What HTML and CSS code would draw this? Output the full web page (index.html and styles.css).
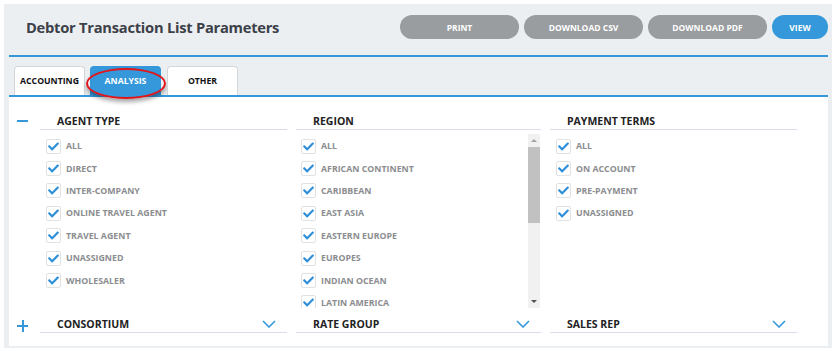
FILE: index.html
```html
<!DOCTYPE html>
<html lang="en">
  <head>
    <meta charset="UTF-8" />
    <title>Debtor Transaction List Parameters</title>
    <link rel="stylesheet" href="styles.css">
  </head>
  <body>
    <div class="page">
      <div class="top-bar">
        <h1>Debtor Transaction List Parameters</h1>
        <div class="actions">
          <button class="btn grey wide">PRINT</button>
          <button class="btn grey wide">DOWNLOAD CSV</button>
          <button class="btn grey wide">DOWNLOAD PDF</button>
          <button class="btn blue">VIEW</button>
        </div>
      </div>

      <div class="tabs">
        <div class="tab">ACCOUNTING</div>
        <div class="tab active">ANALYSIS<span class="mark"></span></div>
        <div class="tab">OTHER</div>
      </div>

      <div class="panel">
        <div class="grid">
          <!-- row 1: open groups -->
          <div class="toggle minus"></div>
          <div class="group-head">AGENT TYPE</div>
          <div class="group-head">REGION</div>
          <div class="group-head">PAYMENT TERMS</div>

          <div></div>
          <ul class="checklist">
            <li><span class="box"><svg viewBox="0 0 512 512"><path d="M173.9 439.4l-166.4-166.4c-10-10-10-26.2 0-36.2l36.2-36.2c10-10 26.2-10 36.2 0L192 312.7 432.1 72.6c10-10 26.2-10 36.2 0l36.2 36.2c10 10 10 26.2 0 36.2l-294.4 294.4c-10 10-26.2 10-36.2 0z"/></svg></span>ALL</li>
            <li><span class="box"><svg viewBox="0 0 512 512"><path d="M173.9 439.4l-166.4-166.4c-10-10-10-26.2 0-36.2l36.2-36.2c10-10 26.2-10 36.2 0L192 312.7 432.1 72.6c10-10 26.2-10 36.2 0l36.2 36.2c10 10 10 26.2 0 36.2l-294.4 294.4c-10 10-26.2 10-36.2 0z"/></svg></span>DIRECT</li>
            <li><span class="box"><svg viewBox="0 0 512 512"><path d="M173.9 439.4l-166.4-166.4c-10-10-10-26.2 0-36.2l36.2-36.2c10-10 26.2-10 36.2 0L192 312.7 432.1 72.6c10-10 26.2-10 36.2 0l36.2 36.2c10 10 10 26.2 0 36.2l-294.4 294.4c-10 10-26.2 10-36.2 0z"/></svg></span>INTER-COMPANY</li>
            <li><span class="box"><svg viewBox="0 0 512 512"><path d="M173.9 439.4l-166.4-166.4c-10-10-10-26.2 0-36.2l36.2-36.2c10-10 26.2-10 36.2 0L192 312.7 432.1 72.6c10-10 26.2-10 36.2 0l36.2 36.2c10 10 10 26.2 0 36.2l-294.4 294.4c-10 10-26.2 10-36.2 0z"/></svg></span>ONLINE TRAVEL AGENT</li>
            <li><span class="box"><svg viewBox="0 0 512 512"><path d="M173.9 439.4l-166.4-166.4c-10-10-10-26.2 0-36.2l36.2-36.2c10-10 26.2-10 36.2 0L192 312.7 432.1 72.6c10-10 26.2-10 36.2 0l36.2 36.2c10 10 10 26.2 0 36.2l-294.4 294.4c-10 10-26.2 10-36.2 0z"/></svg></span>TRAVEL AGENT</li>
            <li><span class="box"><svg viewBox="0 0 512 512"><path d="M173.9 439.4l-166.4-166.4c-10-10-10-26.2 0-36.2l36.2-36.2c10-10 26.2-10 36.2 0L192 312.7 432.1 72.6c10-10 26.2-10 36.2 0l36.2 36.2c10 10 10 26.2 0 36.2l-294.4 294.4c-10 10-26.2 10-36.2 0z"/></svg></span>UNASSIGNED</li>
            <li><span class="box"><svg viewBox="0 0 512 512"><path d="M173.9 439.4l-166.4-166.4c-10-10-10-26.2 0-36.2l36.2-36.2c10-10 26.2-10 36.2 0L192 312.7 432.1 72.6c10-10 26.2-10 36.2 0l36.2 36.2c10 10 10 26.2 0 36.2l-294.4 294.4c-10 10-26.2 10-36.2 0z"/></svg></span>WHOLESALER</li>
          </ul>
          <div class="scroll-wrap">
            <ul class="checklist scroll">
              <li><span class="box"><svg viewBox="0 0 512 512"><path d="M173.9 439.4l-166.4-166.4c-10-10-10-26.2 0-36.2l36.2-36.2c10-10 26.2-10 36.2 0L192 312.7 432.1 72.6c10-10 26.2-10 36.2 0l36.2 36.2c10 10 10 26.2 0 36.2l-294.4 294.4c-10 10-26.2 10-36.2 0z"/></svg></span>ALL</li>
              <li><span class="box"><svg viewBox="0 0 512 512"><path d="M173.9 439.4l-166.4-166.4c-10-10-10-26.2 0-36.2l36.2-36.2c10-10 26.2-10 36.2 0L192 312.7 432.1 72.6c10-10 26.2-10 36.2 0l36.2 36.2c10 10 10 26.2 0 36.2l-294.4 294.4c-10 10-26.2 10-36.2 0z"/></svg></span>AFRICAN CONTINENT</li>
              <li><span class="box"><svg viewBox="0 0 512 512"><path d="M173.9 439.4l-166.4-166.4c-10-10-10-26.2 0-36.2l36.2-36.2c10-10 26.2-10 36.2 0L192 312.7 432.1 72.6c10-10 26.2-10 36.2 0l36.2 36.2c10 10 10 26.2 0 36.2l-294.4 294.4c-10 10-26.2 10-36.2 0z"/></svg></span>CARIBBEAN</li>
              <li><span class="box"><svg viewBox="0 0 512 512"><path d="M173.9 439.4l-166.4-166.4c-10-10-10-26.2 0-36.2l36.2-36.2c10-10 26.2-10 36.2 0L192 312.7 432.1 72.6c10-10 26.2-10 36.2 0l36.2 36.2c10 10 10 26.2 0 36.2l-294.4 294.4c-10 10-26.2 10-36.2 0z"/></svg></span>EAST ASIA</li>
              <li><span class="box"><svg viewBox="0 0 512 512"><path d="M173.9 439.4l-166.4-166.4c-10-10-10-26.2 0-36.2l36.2-36.2c10-10 26.2-10 36.2 0L192 312.7 432.1 72.6c10-10 26.2-10 36.2 0l36.2 36.2c10 10 10 26.2 0 36.2l-294.4 294.4c-10 10-26.2 10-36.2 0z"/></svg></span>EASTERN EUROPE</li>
              <li><span class="box"><svg viewBox="0 0 512 512"><path d="M173.9 439.4l-166.4-166.4c-10-10-10-26.2 0-36.2l36.2-36.2c10-10 26.2-10 36.2 0L192 312.7 432.1 72.6c10-10 26.2-10 36.2 0l36.2 36.2c10 10 10 26.2 0 36.2l-294.4 294.4c-10 10-26.2 10-36.2 0z"/></svg></span>EUROPES</li>
              <li><span class="box"><svg viewBox="0 0 512 512"><path d="M173.9 439.4l-166.4-166.4c-10-10-10-26.2 0-36.2l36.2-36.2c10-10 26.2-10 36.2 0L192 312.7 432.1 72.6c10-10 26.2-10 36.2 0l36.2 36.2c10 10 10 26.2 0 36.2l-294.4 294.4c-10 10-26.2 10-36.2 0z"/></svg></span>INDIAN OCEAN</li>
              <li><span class="box"><svg viewBox="0 0 512 512"><path d="M173.9 439.4l-166.4-166.4c-10-10-10-26.2 0-36.2l36.2-36.2c10-10 26.2-10 36.2 0L192 312.7 432.1 72.6c10-10 26.2-10 36.2 0l36.2 36.2c10 10 10 26.2 0 36.2l-294.4 294.4c-10 10-26.2 10-36.2 0z"/></svg></span>LATIN AMERICA</li>
            </ul>
            <div class="scrollbar">
              <span class="arrow up"></span>
              <span class="thumb"></span>
              <span class="arrow down"></span>
            </div>
          </div>
          <ul class="checklist">
            <li><span class="box"><svg viewBox="0 0 512 512"><path d="M173.9 439.4l-166.4-166.4c-10-10-10-26.2 0-36.2l36.2-36.2c10-10 26.2-10 36.2 0L192 312.7 432.1 72.6c10-10 26.2-10 36.2 0l36.2 36.2c10 10 10 26.2 0 36.2l-294.4 294.4c-10 10-26.2 10-36.2 0z"/></svg></span>ALL</li>
            <li><span class="box"><svg viewBox="0 0 512 512"><path d="M173.9 439.4l-166.4-166.4c-10-10-10-26.2 0-36.2l36.2-36.2c10-10 26.2-10 36.2 0L192 312.7 432.1 72.6c10-10 26.2-10 36.2 0l36.2 36.2c10 10 10 26.2 0 36.2l-294.4 294.4c-10 10-26.2 10-36.2 0z"/></svg></span>ON ACCOUNT</li>
            <li><span class="box"><svg viewBox="0 0 512 512"><path d="M173.9 439.4l-166.4-166.4c-10-10-10-26.2 0-36.2l36.2-36.2c10-10 26.2-10 36.2 0L192 312.7 432.1 72.6c10-10 26.2-10 36.2 0l36.2 36.2c10 10 10 26.2 0 36.2l-294.4 294.4c-10 10-26.2 10-36.2 0z"/></svg></span>PRE-PAYMENT</li>
            <li><span class="box"><svg viewBox="0 0 512 512"><path d="M173.9 439.4l-166.4-166.4c-10-10-10-26.2 0-36.2l36.2-36.2c10-10 26.2-10 36.2 0L192 312.7 432.1 72.6c10-10 26.2-10 36.2 0l36.2 36.2c10 10 10 26.2 0 36.2l-294.4 294.4c-10 10-26.2 10-36.2 0z"/></svg></span>UNASSIGNED</li>
          </ul>

          <!-- row 2: closed groups -->
          <div class="toggle plus"></div>
          <div class="group-head closed">CONSORTIUM<svg class="chev" viewBox="0 0 14 8"><path d="M1 1l6 6 6-6"/></svg></div>
          <div class="group-head closed">RATE GROUP<svg class="chev" viewBox="0 0 14 8"><path d="M1 1l6 6 6-6"/></svg></div>
          <div class="group-head closed">SALES REP<svg class="chev" viewBox="0 0 14 8"><path d="M1 1l6 6 6-6"/></svg></div>
        </div>
      </div>
    </div>
  </body>
</html>
```
FILE: styles.css
```css
/* Global Styles */
body {
  margin: 0;
  background: #fff;
  font-family: "Open Sans", sans-serif;
}

.page {
  width: 819px;
  margin: 4px 0 0 4px;
  padding: 0 4px 2px 5px;
  background: #eceff1;
}

/* Title + buttons */
.top-bar {
  display: flex;
  align-items: center;
  justify-content: space-between;
  height: 51px;
  border-bottom: 2px solid #3498db;
}

h1 {
  margin: 0 0 5px 17px;
  font-size: 14.7px;
  font-weight: 700;
  color: #3b4049;
  letter-spacing: -0.25px;
}

.actions {
  display: flex;
  gap: 5px;
  margin-bottom: 5px;
}

.btn {
  height: 24px;
  border: none;
  border-radius: 12px;
  color: #fff;
  font-family: "Open Sans", sans-serif;
  font-size: 8.5px;
  font-weight: 700;
  cursor: pointer;
}

.btn.wide {
  width: 119px;
}

.btn.grey {
  background: #9a9da0;
}

.btn.blue {
  width: 56px;
  background: #3498db;
}

/* Tabs */
.tabs {
  display: flex;
  gap: 5px;
  padding: 9px 0 0 5px;
  border-bottom: 2px solid #3498db;
}

.tab {
  position: relative;
  box-sizing: border-box;
  width: 71px;
  height: 29px;
  display: flex;
  align-items: center;
  justify-content: center;
  background: #fff;
  border: 1px solid #d4d6d8;
  border-bottom: none;
  border-radius: 4px 4px 0 0;
  font-size: 8.7px;
  font-weight: 700;
  color: #111;
}

.tab + .tab + .tab {
  margin-left: 1px;
}

.tab.active {
  background: #3498db;
  border-color: #3498db;
  color: #fff;
}

.tab .mark {
  position: absolute;
  left: -5px;
  top: 1px;
  width: 76px;
  height: 27px;
  border: 2.5px solid #e0161c;
  border-radius: 50%;
  box-shadow: 0 3px 4px rgba(0, 0, 0, 0.35);
}

/* Content panel */
.panel {
  background: #fff;
  padding: 16px 0 12px 8px;
}

.grid {
  display: grid;
  grid-template-columns: 14px 247px 245px 247px;
  column-gap: 9px;
}

.toggle {
  position: relative;
  width: 11px;
  height: 16px;
}

.toggle::before,
.plus::after {
  content: "";
  position: absolute;
  left: 0;
  top: 7px;
  width: 11px;
  height: 2px;
  background: #3498db;
}

.plus {
  margin-top: 10px;
}

.plus::after {
  left: 4.5px;
  top: 2px;
  width: 2px;
  height: 12px;
}

.group-head {
  display: flex;
  align-items: center;
  justify-content: space-between;
  height: 16px;
  padding: 0 11px 0 17px;
  border-bottom: 1px solid #dcdcee;
  font-size: 10.5px;
  font-weight: 700;
  color: #222;
}

.group-head.closed {
  margin-top: 8px;
}

.chev {
  width: 14px;
  height: 8px;
  fill: none;
  stroke: #3498db;
  stroke-width: 1.6;
}

.checklist {
  list-style: none;
  margin: 0;
  padding: 5px 0 0 6px;
}

.checklist li {
  display: flex;
  align-items: center;
  gap: 5px;
  height: 22.4px;
  font-size: 8.8px;
  font-weight: 700;
  color: #8b8d90;
}

.box {
  display: flex;
  align-items: center;
  justify-content: center;
  width: 13px;
  height: 13px;
  border: 1px solid #e2e2e2;
  border-radius: 2px;
  background: #fff;
}

.box svg {
  width: 11px;
  height: 11px;
  fill: #2e8fd9;
}

.scroll-wrap {
  display: flex;
  height: 174px;
  margin-top: 4px;
  padding-left: 5px;
}

.checklist.scroll {
  flex: 1;
  padding: 1px 0 0 0;
  overflow: hidden;
}

.scrollbar {
  display: flex;
  flex-direction: column;
  align-items: center;
  width: 12px;
  margin-right: 1px;
  background: #f1f1f1;
}

.arrow {
  width: 0;
  height: 0;
  margin: 5px 0;
  border-left: 3px solid transparent;
  border-right: 3px solid transparent;
}

.arrow.up {
  border-bottom: 3px solid #a3a3a3;
}

.arrow.down {
  margin-top: auto;
  border-top: 3px solid #505050;
}

.thumb {
  width: 12px;
  height: 76px;
  background: #c1c1c1;
}
```
